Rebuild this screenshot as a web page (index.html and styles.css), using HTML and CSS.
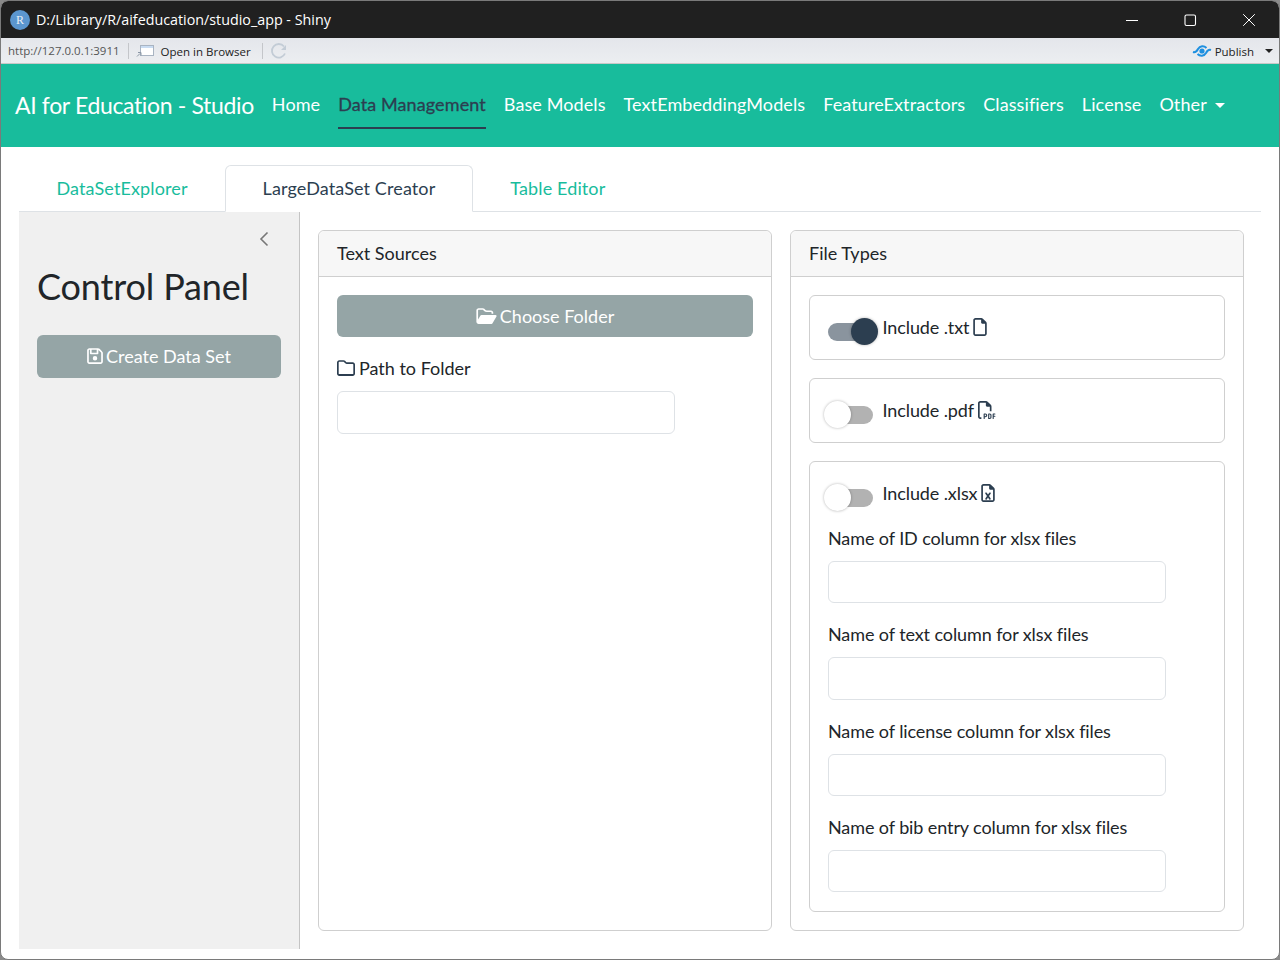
FILE: index.html
```html
<!DOCTYPE html>
<html>
<head>
    <title>AI for Education - Studio</title>
    <link rel="stylesheet" href="styles.css">
</head>
<body>
<div class="window">
    <div class="titlebar">
        <div class="r-logo">R</div>
        <div class="title-text">D:/Library/R/aifeducation/studio_app - Shiny</div>
        <div class="win-buttons">
            <svg width="14" height="14" viewBox="0 0 14 14"><path d="M1 7.5h12" stroke="#fff" stroke-width="1" fill="none"/></svg>
            <svg width="14" height="14" viewBox="0 0 14 14"><rect x="2" y="2" width="10.5" height="10.5" rx="1.5" stroke="#fff" stroke-width="1.1" fill="none"/></svg>
            <svg width="14" height="14" viewBox="0 0 14 14"><path d="M1.2 1.2l11.6 11.6M12.8 1.2L1.2 12.8" stroke="#fff" stroke-width="1" fill="none"/></svg>
        </div>
    </div>
    <div class="toolbar">
        <span class="url">http://127.0.0.1:3911</span>
        <span class="tool-sep"></span>
        <svg class="open-icon" width="18" height="14" viewBox="0 0 18 14"><rect x="4.5" y="1.5" width="13" height="10" fill="#fff" stroke="#a9b4c2"/><rect x="5" y="2" width="12" height="2" fill="#c9dcf2"/><path d="M1 12.5l3-3M2 8.5h3v3" stroke="#8a96a5" fill="none"/></svg>
        <span class="open-text">Open in Browser</span>
        <span class="tool-sep sep-two"></span>
        <svg class="reload-icon" width="18" height="18" viewBox="0 0 18 18"><path d="M15 11.5A6.8 6.8 0 1 1 14 4.5" stroke="#c3ccd6" stroke-width="1.8" fill="none"/><path d="M16 3v5h-5z" fill="#c3ccd6"/></svg>
        <span class="spacer"></span>
        <svg class="publish-icon" width="20" height="16" viewBox="0 0 20 16"><path d="M1 9C4 10 5 8 6 6C8 2.5 12 2.5 14.5 5M19 7C16 6 15 8 14 10C12 13.5 8 13.5 5.5 11" stroke="#1e90e0" stroke-width="2" fill="none"/><circle cx="10" cy="8" r="2.6" fill="#1e90e0"/></svg>
        <span class="publish-text">Publish</span>
        <span class="publish-caret"></span>
    </div>
    <nav class="navbar">
        <a class="brand">AI for Education - Studio</a>
        <a class="nav-link">Home</a>
        <a class="nav-link active">Data Management</a>
        <a class="nav-link">Base Models</a>
        <a class="nav-link">TextEmbeddingModels</a>
        <a class="nav-link">FeatureExtractors</a>
        <a class="nav-link">Classifiers</a>
        <a class="nav-link">License</a>
        <a class="nav-link">Other <span class="caret"></span></a>
    </nav>
    <div class="content">
        <div class="tabs">
            <a class="tab">DataSetExplorer</a>
            <a class="tab tab-active">LargeDataSet Creator</a>
            <a class="tab">Table Editor</a>
        </div>
        <div class="layout">
            <aside class="sidebar">
                <div class="collapse-row">
                    <svg width="12" height="16" viewBox="0 0 12 16"><path d="M9.5 1.5L3 8l6.5 6.5" stroke="#777" stroke-width="1.6" fill="none"/></svg>
                </div>
                <h2>Control Panel</h2>
                <button class="btn btn-create" type="button">
                    <svg width="16" height="18" viewBox="0 0 448 512"><path fill="#fff" d="M48 96V416c0 8.800 7.200 16 16 16H384c8.800 0 16-7.200 16-16V170.500c0-4.200-1.700-8.300-4.700-11.300l33.900-33.900c12 12 18.700 28.300 18.700 45.300V416c0 35.300-28.700 64-64 64H64c-35.300 0-64-28.700-64-64V96C0 60.700 28.700 32 64 32H309.500c17 0 33.300 6.700 45.300 18.700l74.500 74.500-33.900 33.900L320.800 84.700c-.3-.3-.5-.5-.8-.8V184c0 13.300-10.700 24-24 24H104c-13.300 0-24-10.700-24-24V80H64c-8.800 0-16 7.200-16 16zm80-16v80H272V80H128zm32 240a64 64 0 1 1 128 0 64 64 0 1 1 -128 0z"/></svg>
                    Create Data Set
                </button>
            </aside>
            <main class="main">
                <section class="card">
                    <div class="card-header">Text Sources</div>
                    <div class="card-body">
                        <button class="btn btn-folder" type="button">
                            <svg width="21" height="18" viewBox="0 0 576 512"><path fill="#fff" d="M384 480h48c11.400 0 21.900-6 27.600-15.900l112-192c5.800-9.900 5.800-22.100 .1-32.100S555.500 224 544 224H144c-11.400 0-21.900 6-27.600 15.900L48 357.100V96c0-8.800 7.200-16 16-16H181.500c4.200 0 8.300 1.700 11.300 4.700l26.500 26.500c21 21 49.500 32.800 79.200 32.800H416c8.800 0 16 7.200 16 16v32h48V160c0-35.300-28.700-64-64-64H298.500c-17 0-33.300-6.700-45.300-18.700L226.700 50.700c-12-12-28.300-18.700-45.300-18.700H64C28.700 32 0 60.700 0 96V416c0 35.300 28.700 64 64 64H87.700 384z"/></svg>
                            Choose Folder
                        </button>
                        <label class="field-label">
                            <svg width="18" height="18" viewBox="0 0 512 512"><path fill="#2c3e50" d="M64 80h121c4 0 8 2 11 5l39 38c12 12 28 19 45 19h168c9 0 16 7 16 16v256c0 9-7 16-16 16H64c-9 0-16-7-16-16V96c0-9 7-16 16-16zM0 96v320c0 35 29 64 64 64h384c35 0 64-29 64-64V158c0-35-29-64-64-64H280c-4 0-8-2-11-5l-39-38c-12-12-28-19-45-19H64C29 32 0 61 0 96z"/></svg>
                            Path to Folder
                        </label>
                        <input class="text-input" type="text">
                    </div>
                </section>
                <section class="card">
                    <div class="card-header">File Types</div>
                    <div class="card-body">
                        <div class="sub-card">
                            <div class="switch-row">
                                <span class="switch on"><span class="knob"></span></span>
                                <span>Include .txt</span>
                                <svg width="14" height="18" viewBox="0 0 384 512"><path fill="#2c3e50" d="M320 464c8.800 0 16-7.200 16-16V160H256c-17.700 0-32-14.300-32-32V48H64c-8.800 0-16 7.200-16 16V448c0 8.800 7.200 16 16 16H320zM0 64C0 28.700 28.700 0 64 0H229.500c17 0 33.300 6.700 45.300 18.700l90.500 90.500c12 12 18.700 28.300 18.700 45.300V448c0 35.300-28.700 64-64 64H64c-35.300 0-64-28.700-64-64V64z"/></svg>
                            </div>
                        </div>
                        <div class="sub-card">
                            <div class="switch-row">
                                <span class="switch"><span class="knob"></span></span>
                                <span>Include .pdf</span>
                                <svg width="18" height="18" viewBox="0 0 512 512"><path fill="#2c3e50" d="M64 464H96v48H64c-35.300 0-64-28.700-64-64V64C0 28.700 28.700 0 64 0H229.500c17 0 33.300 6.700 45.300 18.700l90.500 90.500c12 12 18.700 28.300 18.700 45.300V288H336V160H256c-17.700 0-32-14.300-32-32V48H64c-8.800 0-16 7.200-16 16V448c0 8.800 7.200 16 16 16zM176 352h32c30.900 0 56 25.100 56 56s-25.100 56-56 56H192v32c0 8.800-7.200 16-16 16s-16-7.200-16-16V448 368c0-8.800 7.200-16 16-16zm32 80c13.300 0 24-10.700 24-24s-10.700-24-24-24H192v48h16zm96-80h32c26.500 0 48 21.500 48 48v64c0 26.500-21.500 48-48 48H304c-8.800 0-16-7.200-16-16V368c0-8.800 7.200-16 16-16zm32 128c8.800 0 16-7.200 16-16V400c0-8.800-7.200-16-16-16H320v96h16zm80-112c0-8.800 7.200-16 16-16h48c8.800 0 16 7.200 16 16s-7.200 16-16 16H448v32h32c8.800 0 16 7.200 16 16s-7.200 16-16 16H448v48c0 8.800-7.200 16-16 16s-16-7.200-16-16V432 368z"/></svg>
                            </div>
                        </div>
                        <div class="sub-card last">
                            <div class="switch-row">
                                <span class="switch"><span class="knob"></span></span>
                                <span>Include .xlsx</span>
                                <svg width="14" height="18" viewBox="0 0 384 512"><path fill="#2c3e50" d="M320 464c8.800 0 16-7.200 16-16V160H256c-17.700 0-32-14.300-32-32V48H64c-8.800 0-16 7.200-16 16V448c0 8.800 7.200 16 16 16H320zM0 64C0 28.700 28.700 0 64 0H229.500c17 0 33.300 6.700 45.300 18.700l90.500 90.500c12 12 18.700 28.300 18.700 45.300V448c0 35.300-28.700 64-64 64H64c-35.300 0-64-28.700-64-64V64zM155.700 250.200L192 302.100l36.300-51.900c7.600-10.900 22.600-13.500 33.400-5.900s13.500 22.600 5.900 33.400L221.300 344l46.400 66.200c7.600 10.900 5 25.800-5.900 33.400s-25.800 5-33.400-5.900L192 385.800l-36.300 51.900c-7.600 10.900-22.600 13.500-33.400 5.900s-13.500-22.600-5.900-33.400L162.700 344l-46.400-66.200c-7.600-10.900-5-25.800 5.900-33.400s25.800-5 33.400 5.900z"/></svg>
                            </div>
                            <label class="xlsx-label">Name of ID column for xlsx files</label>
                            <input class="text-input" type="text">
                            <label class="xlsx-label">Name of text column for xlsx files</label>
                            <input class="text-input" type="text">
                            <label class="xlsx-label">Name of license column for xlsx files</label>
                            <input class="text-input" type="text">
                            <label class="xlsx-label">Name of bib entry column for xlsx files</label>
                            <input class="text-input" type="text">
                        </div>
                    </div>
                </section>
            </main>
        </div>
    </div>
</div>
</body>
</html>
```

FILE: styles.css
```css
html, body {
    margin: 0;
    padding: 0;
    background: #8a8a8a;
}

body {
    font-family: Lato, sans-serif;
    font-size: 18px;
    color: #212529;
}

.window {
    width: 1280px;
    height: 960px;
    box-sizing: border-box;
    border: 1px solid #7a7a7a;
    border-radius: 8px;
    overflow: hidden;
    background: #fff;
    display: flex;
    flex-direction: column;
}

.titlebar {
    height: 37px;
    background: #202020;
    color: #fff;
    display: flex;
    align-items: center;
    padding-left: 9px;
    flex-shrink: 0;
    font-family: "Open Sans", sans-serif;
    font-size: 14.3px;
}

.r-logo {
    width: 20px;
    height: 20px;
    border-radius: 50%;
    background: #5b96cf;
    color: #e8eef6;
    font-family: "Liberation Serif", serif;
    font-size: 12px;
    line-height: 20px;
    text-align: center;
    margin-right: 6px;
}

.win-buttons {
    margin-left: auto;
    display: flex;
    gap: 44.6px;
    padding-right: 23px;
}

.toolbar {
    height: 26px;
    background: linear-gradient(#e4e6eb, #eceef1);
    border-bottom: 1px solid #c8c8c8;
    box-sizing: border-box;
    display: flex;
    align-items: center;
    flex-shrink: 0;
    font-family: "Open Sans", sans-serif;
    font-size: 11.5px;
    padding-left: 7px;
    color: #222;
}

.url {
    color: #555;
}

.tool-sep {
    width: 1px;
    height: 16px;
    background: #c4c6ca;
    margin: 0 7px 0 8px;
}

.open-text {
    margin-left: 7px;
    padding-top: 2px;
}

.sep-two {
    margin: 0 7px 0 11px;
}

.spacer {
    flex: 1;
}

.publish-text {
    margin-left: 3px;
    padding-top: 2px;
}

.publish-caret {
    width: 0;
    height: 0;
    border-left: 4px solid transparent;
    border-right: 4px solid transparent;
    border-top: 4px solid #222;
    margin: 0 6px 0 11px;
}

.navbar {
    height: 83px;
    box-sizing: border-box;
    padding: 0 0 2px 14px;
    background: #18bc9c;
    display: flex;
    align-items: center;
    flex-shrink: 0;
    color: #fff;
    letter-spacing: 0.1px;
}

.brand {
    font-size: 23px;
    letter-spacing: -0.35px;
    margin-right: 18px;
}

.nav-link {
    height: 49px;
    line-height: 48px;
    box-sizing: border-box;
    margin-right: 18px;
}

.nav-link.active {
    color: #2c3e50;
    border-bottom: 2px solid #2c3e50;
    -webkit-text-stroke: 0.3px #2c3e50;
}

.caret {
    display: inline-block;
    width: 0;
    height: 0;
    margin-left: 4px;
    vertical-align: 3px;
    border-left: 5.4px solid transparent;
    border-right: 5.4px solid transparent;
    border-top: 5.4px solid #fff;
}

.content {
    flex: 1;
    padding: 18px 18px 10px;
    display: flex;
    flex-direction: column;
    min-height: 0;
}

.tabs {
    display: flex;
    height: 47px;
    box-sizing: border-box;
    border-bottom: 1px solid #dee2e6;
    flex-shrink: 0;
}

.tab {
    color: #18bc9c;
    padding: 0 36.5px;
    line-height: 45px;
    letter-spacing: 0.12px;
    border: 1px solid transparent;
    height: 47px;
    box-sizing: border-box;
    border-radius: 6px 6px 0 0;
}

.tab-active {
    color: #2c3e50;
    border-color: #dee2e6 #dee2e6 #fff;
    background: #fff;
}

.layout {
    flex: 1;
    display: flex;
    min-height: 0;
}

.sidebar {
    width: 281px;
    box-sizing: border-box;
    background: #f0f0f0;
    border-right: 1px solid #c4c4c4;
    padding: 18px 18px 0;
    flex-shrink: 0;
}

.collapse-row {
    display: flex;
    justify-content: flex-end;
    padding-right: 11px;
    padding-top: 1px;
    height: 17px;
}

.sidebar h2 {
    font-size: 36px;
    font-weight: 400;
    line-height: 43px;
    letter-spacing: -0.15px;
    margin: 17px 0 27px;
    color: #212529;
}

.btn {
    display: flex;
    align-items: center;
    justify-content: center;
    gap: 3px;
    width: 100%;
    border: none;
    border-radius: 6px;
    background: #95a5a6;
    color: #fff;
    font-family: Lato, sans-serif;
    font-size: 18px;
}

.btn-create {
    height: 43px;
    padding: 0 0 1px;
}

.btn-folder {
    height: 42px;
    padding: 0;
}

.main {
    flex: 1;
    display: flex;
    gap: 18px;
    padding: 18px 17px 18px 18px;
    min-width: 0;
}

.card {
    flex: 1;
    border: 1px solid #cfcfcf;
    border-radius: 6px;
    display: flex;
    flex-direction: column;
    min-width: 0;
}

.card-header {
    height: 46px;
    line-height: 45px;
    box-sizing: border-box;
    background: #f7f7f7;
    border-bottom: 1px solid #cfcfcf;
    border-radius: 6px 6px 0 0;
    padding-left: 18px;
    flex-shrink: 0;
}

.card-body {
    padding: 18px;
}

.field-label {
    display: flex;
    align-items: center;
    gap: 4px;
    margin: 20px 0 12px;
    line-height: 22px;
}

.text-input {
    display: block;
    width: 338px;
    height: 42.33px;
    box-sizing: border-box;
    border: 1px solid #dee2e6;
    border-radius: 6px;
    background: #fff;
    padding: 0;
    margin: 0;
}

.field-label + .text-input {
    height: 43px;
}

.sub-card {
    border: 1px solid #cfcfcf;
    border-radius: 6px;
    padding: 18px;
    height: 65px;
    box-sizing: border-box;
    margin-bottom: 18px;
}

.sub-card.last {
    height: 451px;
    margin-bottom: 0;
}

.switch-row {
    display: flex;
    align-items: center;
    height: 27px;
    margin: -1px 0 21px;
    gap: 3.5px;
    letter-spacing: -0.1px;
}

.switch {
    position: relative;
    display: block;
    width: 45px;
    height: 18px;
    margin-right: 6px;
    margin-top: 10px;
    border-radius: 9px;
    background: #b2b2b2;
    flex-shrink: 0;
}

.switch.on {
    background: #8a949e;
}

.knob {
    position: absolute;
    left: -4px;
    top: -5px;
    width: 27px;
    height: 27px;
    border-radius: 50%;
    background: #fff;
    box-shadow: 0 0 3px rgba(0, 0, 0, 0.3);
}

.switch.on .knob {
    left: 23px;
    background: #2c3e50;
}

.xlsx-label {
    display: block;
    line-height: 22px;
    letter-spacing: -0.1px;
    margin: 20px 0 12px;
}
```
